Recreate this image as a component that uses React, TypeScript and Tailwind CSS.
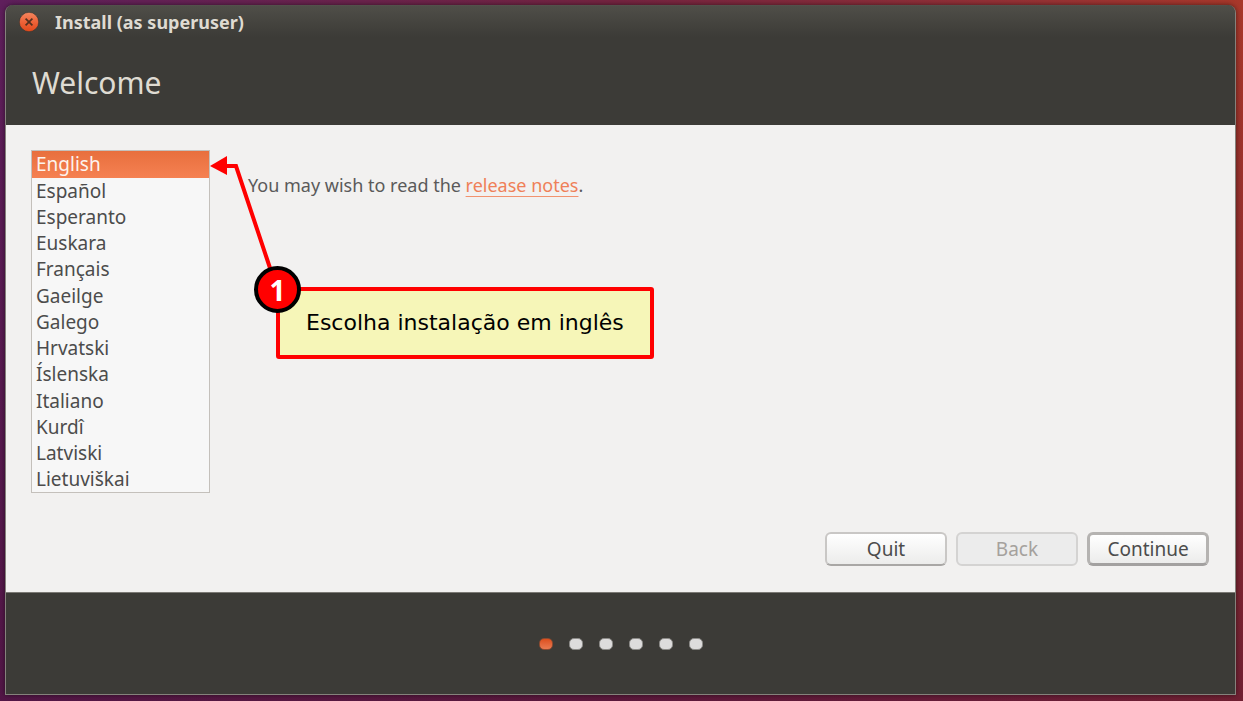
import { useState } from "react";

const languages = [
  "English",
  "Español",
  "Esperanto",
  "Euskara",
  "Français",
  "Gaeilge",
  "Galego",
  "Hrvatski",
  "Íslenska",
  "Italiano",
  "Kurdî",
  "Latviski",
  "Lietuviškai",
];

const steps = [0, 1, 2, 3, 4, 5];

function TitleBar() {
  return (
    <div className="flex h-8 items-center gap-4 rounded-t-lg border-t border-[#52514b] bg-linear-to-b from-[#4f4e48] to-[#3c3b37] pl-[13px]">
      <button type="button" aria-label="Close" className="size-5">
        <svg viewBox="0 0 20 20" className="size-5" aria-hidden="true">
          <defs>
            <linearGradient id="close-fill" x1="0" y1="0" x2="0" y2="1">
              <stop offset="0" stopColor="#f4875f" />
              <stop offset="0.5" stopColor="#ee6339" />
              <stop offset="1" stopColor="#e2481a" />
            </linearGradient>
          </defs>
          <circle cx="10" cy="10" r="9.7" fill="url(#close-fill)" stroke="#35342f" strokeWidth="0.6" />
          <path d="M6.6 6.6l6.8 6.8M13.4 6.6l-6.8 6.8" stroke="#54301f" strokeWidth="1.7" />
        </svg>
      </button>
      <span className="text-[18px] leading-6 font-bold text-[#dfdbd2]">Install (as superuser)</span>
    </div>
  );
}

function LanguageList() {
  const [language, setLanguage] = useState("English");
  return (
    <select
      size={13}
      aria-label="Language"
      value={language}
      onChange={(e) => setLanguage(e.target.value)}
      className="h-[343px] w-[179px] shrink-0 overflow-hidden border border-[#c4c0bb] bg-[#f7f7f7] p-0 text-[19px] text-[#4c4c4c] outline-none"
    >
      {languages.map((name) => (
        <option
          key={name}
          value={name}
          className="h-[26px] min-h-[26px] px-1 py-0 leading-[26px] nth-[4n+1]:h-[27px] checked:bg-linear-to-b checked:from-[#e86f3d] checked:to-[#f58152] checked:[-webkit-text-fill-color:#fdf3ee]"
        >
          {name}
        </option>
      ))}
    </select>
  );
}

function Callout() {
  return (
    <div className="pointer-events-none absolute top-0 left-0">
      <svg width="300" height="170" viewBox="0 0 300 170" className="absolute top-0 left-0" aria-hidden="true">
        <path d="M221 41H230L265 146" fill="none" stroke="#f00" strokeWidth="4" />
        <path d="M204 41L221 31V50Z" fill="#f00" />
      </svg>
      <div className="absolute top-[162px] left-[270px] rounded-[3px] border-4 border-[#f00] bg-[#f6f6b8] px-[26px] py-4 font-['DejaVu_Sans',sans-serif] text-[22px] leading-8 whitespace-nowrap text-black">
        Escolha instalação em inglês
      </div>
      <div className="absolute top-[141px] left-[248px] flex size-[47px] items-center justify-center rounded-full border-4 border-black bg-[#f00] font-['Open_Sans',sans-serif] text-[28px] leading-8 font-bold text-white">
        1
      </div>
    </div>
  );
}

export default function App() {
  return (
    <div className="bg-linear-to-r from-[#5f1f5c] via-[#742440] to-[#a8382a]">
      <div className="flex min-h-screen flex-col bg-linear-to-b from-transparent to-[#4a1038]/60 pt-[5px] pr-[7px] pb-[6px] pl-[5px] font-['Noto_Sans',sans-serif]">
        <div className="flex flex-1 flex-col rounded-t-lg border-x border-b border-[#85827c] bg-[#3c3b37] shadow-[0_0_5px_rgba(0,0,0,0.5)]">
          <header className="h-[120px]">
            <TitleBar />
            <h1 className="px-[26px] pt-[26px] text-[30px] leading-10 text-[#dfdbd2]">Welcome</h1>
          </header>

          <main className="relative flex flex-1 flex-col justify-between bg-[#f2f1f0] px-[25px] pt-[25px] pb-[26px]">
            <div className="flex items-start gap-[38px]">
              <LanguageList />
              <p className="pt-[22px] text-[18px] leading-[26px] text-[#5a5a5a]">
                You may wish to read the{" "}
                <a
                  href="#release-notes"
                  className="text-[#ef8058] underline decoration-[#f2936f] decoration-1 underline-offset-4 [text-decoration-skip-ink:none]"
                >
                  release notes
                </a>
                .
              </p>
            </div>
            <div className="flex justify-end gap-[9px] pr-px text-[19px] leading-6 text-[#4c4c4c]">
              <button type="button" className="h-[34px] w-[122px] rounded-md border-2 border-[#c9c7c5] border-b-[#a9a7a5] bg-linear-to-b from-white to-[#ececeb]">
                Quit
              </button>
              <button type="button" disabled className="h-[34px] w-[122px] rounded-md border-2 border-[#d4d3d2] bg-[#ececec] text-[#a5a19d]">
                Back
              </button>
              <button type="button" className="h-[34px] w-[122px] rounded-md border-[3px] border-[#b5b3b1] border-b-[#a3a1a0] bg-linear-to-b from-white to-[#ececeb]">
                Continue
              </button>
            </div>
            <Callout />
          </main>

          <footer className="flex h-[102px] items-center justify-center gap-4 border-t border-[#7b7974]">
            {steps.map((step) => (
              <span
                key={step}
                className={
                  step === 0
                    ? "h-3 w-[14px] rounded-[5px] border border-[#8a4a30] bg-linear-to-b from-[#dd4f1c] to-[#ea7a50]"
                    : "h-3 w-[14px] rounded-[5px] border border-[#8b8a87] bg-[#dddcdc]"
                }
              />
            ))}
          </footer>
        </div>
      </div>
    </div>
  );
}
